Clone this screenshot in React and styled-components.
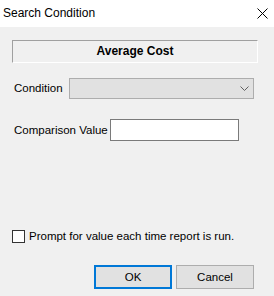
import styled, { createGlobalStyle } from "styled-components";

const Global = createGlobalStyle`
  html, body {
    margin: 0;
    padding: 0;
    background: #f0f0f0;
  }
  body {
    font-family: "Liberation Sans", Arial, sans-serif;
    font-size: 11.5px;
    line-height: 15px;
    color: #000;
  }
`;

const Window = styled.div`
  width: 274px;
  height: 296px;
  display: flex;
  flex-direction: column;
  background: #f0f0f0;
`;

const TitleBar = styled.div`
  height: 27px;
  background: #fff;
  display: flex;
  align-items: center;
  justify-content: space-between;
  padding: 0 6px 0 3px;
  box-sizing: border-box;
`;

const Title = styled.span`
  font-size: 12px;
  white-space: nowrap;
`;

const Body = styled.div`
  flex: 1;
  display: flex;
  flex-direction: column;
  padding: 13px 20px 0 12px;
`;

const Header = styled.div`
  width: 246px;
  height: 23px;
  box-sizing: border-box;
  border-top: 1px solid #a0a0a0;
  border-left: 1px solid #a0a0a0;
  border-bottom: 1px solid #fff;
  border-right: 1px solid #fff;
  display: flex;
  align-items: center;
  justify-content: center;
  font-weight: bold;
  font-size: 12px;
`;

const Row = styled.div`
  display: flex;
  align-items: center;
  margin-top: ${({ gap }) => gap}px;
  padding-left: 2px;
`;

const Label = styled.span`
  width: ${({ w }) => w}px;
  white-space: nowrap;
  flex: none;
`;

const Select = styled.div`
  width: 189px;
  height: 21px;
  box-sizing: border-box;
  border: 1px solid #adadad;
  background: #e1e1e1;
  display: flex;
  align-items: center;
  justify-content: flex-end;
  padding-right: 4px;
`;

const Input = styled.div`
  width: 129px;
  height: 22px;
  box-sizing: border-box;
  border: 1px solid #7a7a7a;
  background: #fff;
`;

const CheckRow = styled.label`
  display: flex;
  align-items: center;
  margin-top: 88px;
  white-space: nowrap;
`;

const Box = styled.span`
  width: 13px;
  height: 13px;
  box-sizing: border-box;
  border: 1px solid #333;
  background: #fff;
  margin-right: 4px;
`;

const Buttons = styled.div`
  display: flex;
  justify-content: flex-end;
  gap: 4px;
  margin-top: 21px;
`;

const Button = styled.button`
  width: 78px;
  height: 24px;
  box-sizing: border-box;
  background: #e1e1e1;
  border: ${({ primary }) => (primary ? "2px solid #0078d7" : "1px solid #adadad")};
  font-family: inherit;
  font-size: 11.5px;
  color: #000;
  padding: 0;
`;

export default function App() {
  return (
    <Window>
      <Global />
      <TitleBar>
        <Title>Search Condition</Title>
        <svg width="11" height="11" viewBox="0 0 11 11">
          <path d="M0.5 0.5 L10.5 10.5 M10.5 0.5 L0.5 10.5" stroke="#000" strokeWidth="1" />
        </svg>
      </TitleBar>
      <Body>
        <Header>Average Cost</Header>
        <Row gap={15}>
          <Label w={55}>Condition</Label>
          <Select>
            <svg width="9" height="5" viewBox="0 0 9 5">
              <path d="M0.5 0.5 L4.5 4.5 L8.5 0.5" stroke="#606060" fill="none" strokeWidth="1" />
            </svg>
          </Select>
        </Row>
        <Row gap={20}>
          <Label w={96}>Comparison Value</Label>
          <Input />
        </Row>
        <CheckRow>
          <Box />
          <span>Prompt for value each time report is run.</span>
        </CheckRow>
        <Buttons>
          <Button primary>OK</Button>
          <Button>Cancel</Button>
        </Buttons>
      </Body>
    </Window>
  );
}
